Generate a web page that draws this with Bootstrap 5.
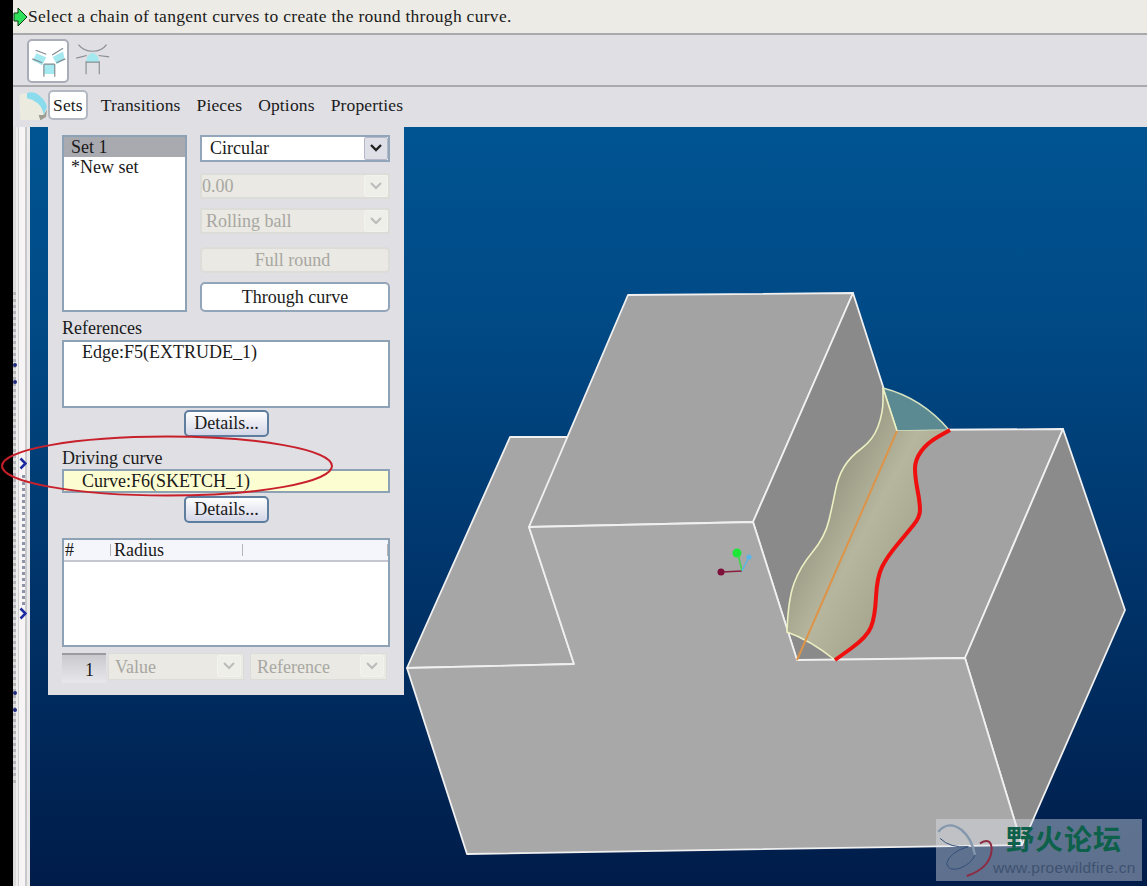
<!DOCTYPE html>
<html lang="en">
<head>
  <meta charset="UTF-8" />
  <title>Round through curve</title>
  <link href="https://cdn.jsdelivr.net/npm/bootstrap@5.3.2/dist/css/bootstrap.min.css" rel="stylesheet" />
  <style>
    html, body { height: 100%; }
    body { background: #000; overflow: hidden; font-family: "Liberation Serif", serif; color: #1a1a1a; }
    .app-wrap { margin-left: 13px; height: 886px; }
    .prompt-bar { height: 35px; background: #ecebe5; border-bottom: 2px solid #a9a9ab; font-size: 17.5px; line-height: 33px; letter-spacing: .3px; }
    .tool-bar { height: 52px; background: #dfdfe4; border-bottom: 2px solid #a9a9ae; padding: 4px 14px; gap: 6px; }
    .tool-btn { width: 42px; height: 44px; background: #fff; border: 2px solid #a8adb8; border-radius: 5px; }
    .tab-bar { height: 40px; background: #dfdfe4; font-size: 17.5px; letter-spacing: .15px; padding: 3px 0 0 4px; }
    .tab-icon { margin-right: 1px; }
    .tab-item { padding: 0 5px; line-height: 30px; margin-right: 6px; }
    .tab-item.on { background: #fff; border: 2px solid #b4b8c2; border-radius: 5px; padding: 0 3px; line-height: 26px; height: 30px; margin-right: 8px; }
    .work-area { height: 759px; }
    .side-strip { width: 17px; position: relative; background: linear-gradient(90deg, #dcdcdc 0 3px, #eeeeee 3px 5px, #cfcfd2 5px 6px, #f6f4f4 6px 12px, #c9c9cc 12px 14px, #e9e9e9 14px 17px); }
    .dot-line { position: absolute; width: 3px; border-left: 3px dotted #b4b4b8; }
    .dot-outer { left: 0; top: 165px; height: 491px; }
    .dot-inner { left: 9px; top: 348px; height: 130px; border-left-color: #8f93a8; }
    .chev-mark { position: absolute; left: 6px; }
    .chev-one { top: 330px; }
    .chev-two { top: 480px; }
    .speck { position: absolute; left: 0; width: 4px; height: 4px; border-radius: 50%; background: #1d2a80; }
    .speck-a { top: 236px; }
    .speck-b { top: 253px; }
    .speck-c { top: 564px; }
    .speck-d { top: 581px; }
    .canvas-area { background: linear-gradient(180deg, #005492 0, #004a86 25%, #00346a 60%, #001c49 100%); }
    .model-svg { position: absolute; left: 0; top: 0; width: 1117px; height: 759px; }
    .opt-panel { position: absolute; left: 18px; top: 0; width: 356px; height: 568px; background: #dfdfe4; padding: 8px 14px 0; font-size: 18px; line-height: 20px; }
    .set-list { width: 125px; height: 177px; background: #fff; border: 2px solid #8ea2b5; }
    .set-row { padding-left: 7px; line-height: 20px; }
    .set-row.on { background: #a9a9b0; }
    .opt-col { width: 190px; margin-left: 13px; }
    .sel-box { height: 27px; border: 2px solid #93a5b8; background: #fff; padding-left: 8px; line-height: 23px; margin-bottom: 11px; }
    .sel-box.off { height: 26px; background: #eae9e3; border-color: #dcdcd8; color: #a7a7a2; padding-left: 0; margin-bottom: 9px; line-height: 22px; }
    .sel-box.off.tight { margin-bottom: 13px; padding-left: 4px; }
    .sel-arrow { width: 24px; height: 23px; background: #dfdfe8; border: 1px solid #b5b8c8; border-radius: 2px; }
    .off .sel-arrow, .mini-sel .sel-arrow { background: #efefe9; border-color: #f3f3ee; height: 22px; }
    .act-btn { height: 30px; text-align: center; line-height: 26px; border: 2px solid #93a5b8; border-radius: 5px; background: #fff; }
    .act-btn.off { height: 26px; line-height: 22px; margin-bottom: 9px; padding-right: 5px; background: #eae9e3; border-color: #dcdcd8; color: #a7a7a2; }
    .field-label { line-height: 20px; margin-top: 6px; margin-bottom: 2px; }
    .field-label.drive { margin-top: 11px; margin-bottom: 1px; }
    .ref-box { height: 68px; background: #fff; border: 2px solid #8ea2b5; padding-left: 18px; line-height: 20px; }
    .ref-box.curve { height: 24px; background: #fdfdd2; line-height: 20px; }
    .det-btn { width: 85px; height: 27px; margin: 2px 0 0 1px; border: 2px solid #5e7d9f; border-radius: 5px; background: linear-gradient(#fff, #d3d6e6); text-align: center; line-height: 23px; }
    .det-btn.low { margin-top: 3px; }
    .grid-box { height: 109px; margin-top: 15px; background: #fff; border: 2px solid #8ea2b5; }
    .grid-head { height: 22px; background: #f5f6fb; border-bottom: 2px solid #c4c6d0; }
    .grid-cell { border-right: 1px solid #b5b5b5; height: 12px; line-height: 12px; margin-top: 4px; }
    .cell-num { width: 47px; padding-left: 1px; }
    .cell-rad { width: 132px; padding-left: 3px; }
    .bottom-row { margin-top: 6px; }
    .count-box { width: 44px; height: 30px; margin-right: 2px; background: linear-gradient(#c9c9ce, #e8e8ec); border-top: 2px solid #9b9b9f; text-align: right; padding-right: 12px; line-height: 30px; }
    .mini-sel { height: 27px; background: #eae9e3; border: 1px solid #dcdcd8; color: #a7a7a2; padding: 1px 2px 0 6px; line-height: 25px; }
    .sel-value { width: 136px; margin-right: 6px; }
    .sel-refer { width: 137px; }
    .red-oval { position: absolute; left: -30px; top: 308px; width: 334px; height: 62px; pointer-events: none; }
    .water-mark { position: absolute; left: 906px; top: 692px; width: 206px; height: 62px; background: rgba(225,228,235,.42); overflow: hidden; }
    .wm-logo { position: absolute; left: 0; top: 0; }
    .wm-cn { position: absolute; left: 70px; top: 0; font: 700 28px/38px "Noto Sans CJK SC", sans-serif; color: #0d6049; letter-spacing: 1px; white-space: nowrap; }
    .wm-url { position: absolute; left: 57px; top: 37px; font: 15.5px/24px "Liberation Sans", sans-serif; color: #3e5270; letter-spacing: .3px; }
  </style>
</head>
<body>
  <div class="app-wrap d-flex flex-column">
    <div class="prompt-bar d-flex">
      <svg class="flex-shrink-0" width="15" height="33" viewBox="0 0 15 33"><path d="M1 13h4V8l9 9-9 9v-5H1z" fill="#2ee05a" stroke="#0a3a12"/></svg>
      <span>Select a chain of tangent curves to create the round through curve.</span>
    </div>

    <div class="tool-bar d-flex">
      <div class="tool-btn d-flex align-items-center justify-content-center">
        <svg width="38" height="33" viewBox="60 30 115 100">
          <path d="M82 55l30 12-12 24-28-14zM132 66l31-16 5 24-24 14z" fill="#a4e8f0"/>
          <path d="M105 88h33v30h-33z" fill="#a4e8f0"/>
          <path d="M80 46l32 12M130 60l33-20M70 72l30 12M170 72l-27 12M105 88v38M138 88v38M105 88h33" stroke="#83898e" stroke-width="3.5" fill="none"/>
        </svg>
      </div>
      <svg class="flex-shrink-0 mt-1" width="35" height="33" viewBox="195 30 105 100">
        <path d="M232 72q16-24 32 0l4 16h-40z" fill="#a4e8f0"/>
        <path d="M205 35q15 20 43 20t42-20M198 76l32-8M298 72l-32-4M228 85v40M268 85v40M228 88h40" stroke="#8a8f93" stroke-width="3.5" fill="none"/>
      </svg>
    </div>

    <div class="tab-bar d-flex align-items-start">
      <svg class="tab-icon flex-shrink-0" width="30" height="31" viewBox="15 165 90 93">
        <path d="M22 178q25-8 45 2 30 22 35 50l-17 25H25z" fill="#ecebe0"/>
        <path d="M45 175q20-8 35 5 20 15 25 36l-10 24q-3-22-18-35-14-12-32-15z" fill="#8adcec"/>
        <path d="M80 240l15 0 10-16-3 22-17 10z" fill="#9c9c90"/>
      </svg>
      <div class="tab-item on">Sets</div>
      <div class="tab-item">Transitions</div>
      <div class="tab-item">Pieces</div>
      <div class="tab-item">Options</div>
      <div class="tab-item">Properties</div>
    </div>

    <div class="work-area d-flex">
      <div class="side-strip flex-shrink-0">
        <span class="dot-line dot-outer"></span>
        <span class="dot-line dot-inner"></span>
        <span class="speck speck-a"></span>
        <span class="speck speck-b"></span>
        <span class="speck speck-c"></span>
        <span class="speck speck-d"></span>
        <svg class="chev-mark chev-one" width="8" height="13" viewBox="0 0 8 13"><path d="M1.5 1.5l5 5-5 5" fill="none" stroke="#1c2aa0" stroke-width="2.6"/></svg>
        <svg class="chev-mark chev-two" width="8" height="13" viewBox="0 0 8 13"><path d="M1.5 1.5l5 5-5 5" fill="none" stroke="#1c2aa0" stroke-width="2.6"/></svg>
      </div>
      <div class="canvas-area flex-grow-1 position-relative">
        <svg class="model-svg" viewBox="30 127 1117 759">
          <defs>
            <linearGradient id="roundFill" x1="800" y1="480" x2="930" y2="550" gradientUnits="userSpaceOnUse">
              <stop offset="0" stop-color="#8a8a76"/>
              <stop offset=".55" stop-color="#b6b69e"/>
              <stop offset="1" stop-color="#a3a38c"/>
            </linearGradient>
          </defs>
          <g stroke="#f0f0f0" stroke-width="1.8" stroke-linejoin="round">
            <path d="M510 437L570 437 529 527 574 664 407 668z" fill="#a6a6a6"/>
            <path d="M628 295L853 293 753 522 529 527z" fill="#a3a3a3"/>
            <path d="M853 293L897 430 836 660 797 660 753 522z" fill="#8a8a8a"/>
            <path d="M897 430L1063 429 965 658 836 660z" fill="#a2a2a2"/>
            <path d="M1063 429L1125 610 1022 845 965 658z" fill="#8b8b8b"/>
            <path d="M407 668L574 664 529 527 753 522 797 660 965 658 1022 845 467 854z" fill="#a8a8a8"/>
          </g>
          <path d="M883 388Q922 398 949 430L897 431z" fill="#5c8a93" stroke="#d6e2c0" stroke-width="1.5"/>
          <path d="M883 388L883 400.5Q883 413 878 426.5Q873 440 861.5 448.5Q850 457 844 467Q838 477 835.5 490Q833 503 829 520Q825 537 812.5 552Q800 567 794 583.5Q788 600 787 632Q810 640 835 660L851 648.5Q867 637 871 627Q875 617 876 597Q877 577 882 567Q887 557 897 545Q907 533 913.5 525Q920 517 920 510Q920 503 917.5 490Q915 477 915 468.5Q915 460 921 451.5Q927 443 938.5 436.5L950 430L897 431z" fill="url(#roundFill)"/>
          <path d="M883 388L883 400.5Q883 413 878 426.5Q873 440 861.5 448.5Q850 457 844 467Q838 477 835.5 490Q833 503 829 520Q825 537 812.5 552Q800 567 794 583.5Q788 600 787 632Q810 640 835 660M883 388L897 431" fill="none" stroke="#ecefc2" stroke-width="1.6"/>
          <path d="M797 660L897 431" stroke="#dd9448" stroke-width="2"/>
          <path d="M950 430L938.5 436.5Q927 443 921 451.5Q915 460 915 468.5Q915 477 917.5 490Q920 503 920 510Q920 517 913.5 525Q907 533 897 545Q887 557 882 567Q877 577 876 597Q875 617 871 627Q867 637 851 648.5L835 660" fill="none" stroke="#ef0f0f" stroke-width="4"/>
          <path d="M742 571L722 572" stroke="#8b1f40" stroke-width="1.5"/>
          <path d="M742 571L738 554" stroke="#3dd64a" stroke-width="1.5"/>
          <path d="M742 571L749 557" stroke="#58b6e8" stroke-width="1.5"/>
          <circle cx="721" cy="572" r="3.5" fill="#7d0f38"/>
          <circle cx="737" cy="553" r="4.5" fill="#1fe73a"/>
          <circle cx="749" cy="557" r="2.5" fill="#58b6e8"/>
        </svg>

        <div class="opt-panel">
          <div class="d-flex">
            <div class="set-list flex-shrink-0">
              <div class="set-row on">Set 1</div>
              <div class="set-row">*New set</div>
            </div>
            <div class="opt-col">
              <div class="sel-box d-flex justify-content-between">Circular<span class="sel-arrow d-flex align-items-center justify-content-center"><svg width="14" height="9"><path d="M2 1l5 5 5-5" fill="none" stroke="#222" stroke-width="2.4"/></svg></span></div>
              <div class="sel-box off d-flex justify-content-between">0.00<span class="sel-arrow d-flex align-items-center justify-content-center"><svg width="14" height="9"><path d="M2 1l5 5 5-5" fill="none" stroke="#bbb" stroke-width="2"/></svg></span></div>
              <div class="sel-box off tight d-flex justify-content-between">Rolling ball<span class="sel-arrow d-flex align-items-center justify-content-center"><svg width="14" height="9"><path d="M2 1l5 5 5-5" fill="none" stroke="#bbb" stroke-width="2"/></svg></span></div>
              <div class="act-btn off">Full round</div>
              <div class="act-btn">Through curve</div>
            </div>
          </div>
          <div class="field-label">References</div>
          <div class="ref-box">Edge:F5(EXTRUDE_1)</div>
          <div class="d-flex justify-content-center"><div class="det-btn">Details...</div></div>
          <div class="field-label drive">Driving curve</div>
          <div class="ref-box curve">Curve:F6(SKETCH_1)</div>
          <div class="d-flex justify-content-center"><div class="det-btn low">Details...</div></div>
          <div class="grid-box">
            <div class="grid-head d-flex">
              <div class="grid-cell cell-num">#</div>
              <div class="grid-cell cell-rad">Radius</div>
              <div class="grid-cell flex-grow-1"></div>
            </div>
          </div>
          <div class="bottom-row d-flex">
            <div class="count-box">1</div>
            <div class="mini-sel sel-value d-flex justify-content-between">Value<span class="sel-arrow d-flex align-items-center justify-content-center"><svg width="14" height="9"><path d="M2 1l5 5 5-5" fill="none" stroke="#bbb" stroke-width="2"/></svg></span></div>
            <div class="mini-sel sel-refer d-flex justify-content-between">Reference<span class="sel-arrow d-flex align-items-center justify-content-center"><svg width="14" height="9"><path d="M2 1l5 5 5-5" fill="none" stroke="#bbb" stroke-width="2"/></svg></span></div>
          </div>
        </div>

        <svg class="red-oval" viewBox="0 0 334 62"><ellipse cx="167" cy="31" rx="165" ry="29.5" fill="none" stroke="#c8202a" stroke-width="2"/></svg>

        <div class="water-mark">
          <svg class="wm-logo" width="60" height="62" viewBox="18 28 180 184">
            <path d="M25 65Q55 30 95 60 125 85 135 135" fill="none" stroke="#8497ad" stroke-width="7"/>
            <path d="M30 85Q60 115 115 110 60 125 50 160 55 185 90 175 125 160 135 135" fill="none" stroke="#33507a" stroke-width="3"/>
            <path d="M150 100Q185 80 185 120 180 175 110 198" fill="none" stroke="#8e2b42" stroke-width="6"/>
          </svg>
          <span class="wm-cn">野火论坛</span>
          <span class="wm-url">www.proewildfire.cn</span>
        </div>
      </div>
    </div>
  </div>
  <script src="https://cdn.jsdelivr.net/npm/bootstrap@5.3.2/dist/js/bootstrap.bundle.min.js"></script>
</body>
</html>
